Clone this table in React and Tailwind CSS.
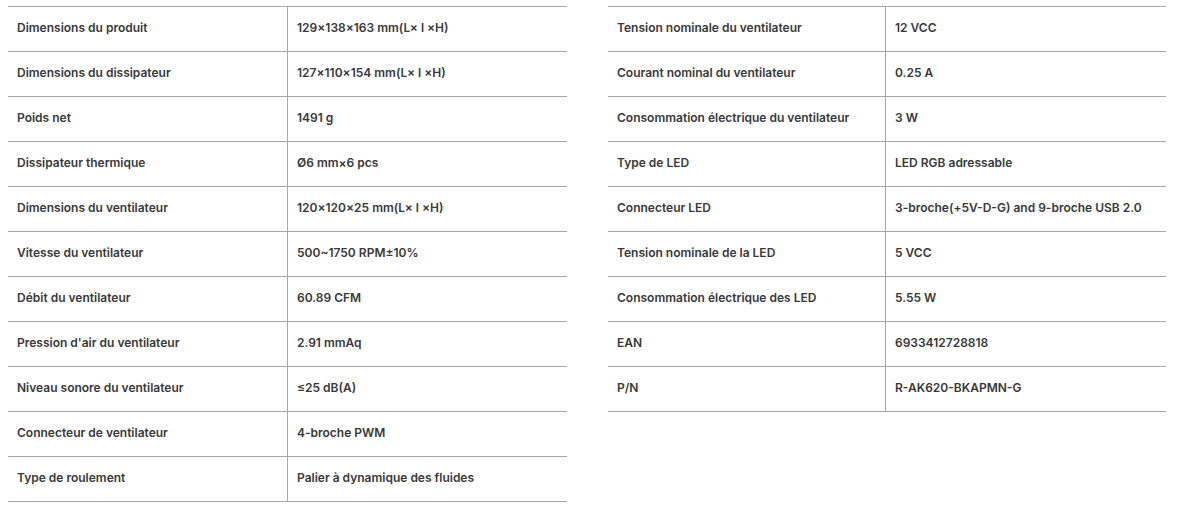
const leftRows = [
  ["Dimensions du produit", "129×138×163 mm(L× l ×H)"],
  ["Dimensions du dissipateur", "127×110×154 mm(L× l ×H)"],
  ["Poids net", "1491 g"],
  ["Dissipateur thermique", "Ø6 mm×6 pcs"],
  ["Dimensions du ventilateur", "120×120×25 mm(L× l ×H)"],
  ["Vitesse du ventilateur", "500~1750 RPM±10%"],
  ["Débit du ventilateur", "60.89 CFM"],
  ["Pression d'air du ventilateur", "2.91 mmAq"],
  ["Niveau sonore du ventilateur", "≤25 dB(A)"],
  ["Connecteur de ventilateur", "4-broche PWM"],
  ["Type de roulement", "Palier à dynamique des fluides"],
];

const rightRows = [
  ["Tension nominale du ventilateur", "12 VCC"],
  ["Courant nominal du ventilateur", "0.25 A"],
  ["Consommation électrique du ventilateur", "3 W"],
  ["Type de LED", "LED RGB adressable"],
  ["Connecteur LED", "3-broche(+5V-D-G) and 9-broche USB 2.0"],
  ["Tension nominale de la LED", "5 VCC"],
  ["Consommation électrique des LED", "5.55 W"],
  ["EAN", "6933412728818"],
  ["P/N", "R-AK620-BKAPMN-G"],
];

function SpecTable({ rows, width, labelWidth }) {
  return (
    <div className={`${width} border-t border-[#a6a6a6]`}>
      {rows.map(([label, value]) => (
        <div key={label} className="flex h-[45px] border-b border-[#a6a6a6]">
          <div className={`${labelWidth} flex items-center border-r border-[#a6a6a6] pb-[2px] pl-[9px]`}>
            {label}
          </div>
          <div className="flex flex-1 items-center pb-[2px] pl-[9px]">{value}</div>
        </div>
      ))}
    </div>
  );
}

export default function App() {
  return (
    <div
      className="flex min-h-[508px] items-start gap-[41px] bg-white pl-[8px] pt-[6px] text-[12px] font-semibold text-[#383838]"
      style={{ fontFamily: "Inter, 'Liberation Sans', sans-serif" }}
    >
      <SpecTable rows={leftRows} width="w-[559px]" labelWidth="w-[280px]" />
      <SpecTable rows={rightRows} width="w-[558px]" labelWidth="w-[278px]" />
    </div>
  );
}
